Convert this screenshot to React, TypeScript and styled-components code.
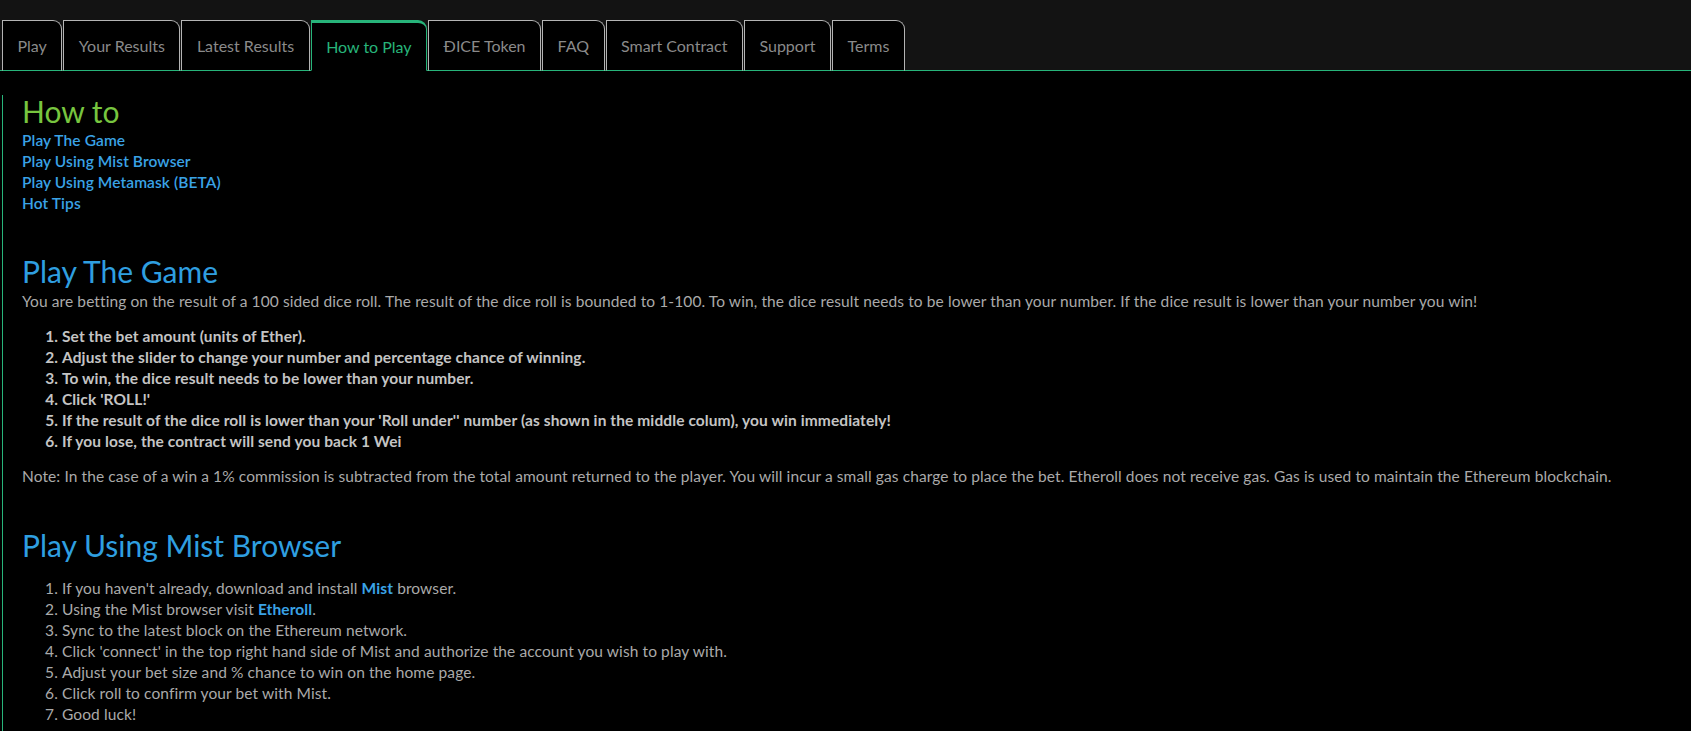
import React from "react";
import styled, { createGlobalStyle } from "styled-components";

const GlobalStyle = createGlobalStyle`
  html, body {
    margin: 0;
    padding: 0;
    background: #000;
  }
  body {
    font-family: "Lato", "Noto Sans", sans-serif;
    font-size: 15.5px;
    letter-spacing: 0.1px;
    line-height: 21px;
    color: #aaaaaa;
  }
`;

const GREEN = "#27b47a";

const Page = styled.div`
  min-height: 731px;
  background: #000;
`;

const TabBar = styled.nav`
  display: flex;
  align-items: flex-end;
  gap: 1px;
  padding: 20px 0 0 2px;
  background: #131313;
  border-bottom: 1px solid ${GREEN};
`;

const Tab = styled.a<{ $active?: boolean }>`
  display: flex;
  align-items: center;
  height: 51px;
  box-sizing: border-box;
  margin-bottom: -1px;
  padding: 0 14.5px;
  font-size: 16px;
  letter-spacing: 0;
  color: ${(p) => (p.$active ? GREEN : "#8a8a8a")};
  background: #000;
  border: 1px solid ${(p) => (p.$active ? GREEN : "#b4b4b4")};
  border-top-width: ${(p) => (p.$active ? "3px" : "1px")};
  border-bottom: ${(p) => (p.$active ? "1px solid #000" : `1px solid ${GREEN}`)};
  border-radius: 0 9px 0 0;
  text-decoration: none;
  white-space: nowrap;
  cursor: pointer;
`;

const Content = styled.main`
  margin-left: 2px;
  border-left: 1px solid ${GREEN};
  padding: 0 20px 20px 19px;
`;

const Title = styled.h2<{ $tone: "lime" | "blue"; $top: number; $bottom: number }>`
  margin: ${(p) => p.$top}px 0 ${(p) => p.$bottom}px;
  font-size: 30px;
  line-height: 33px;
  font-weight: 400;
  letter-spacing: 0;
  color: ${(p) => (p.$tone === "lime" ? "#77c53f" : "#2f9fe0")};
`;

const Toc = styled.div`
  display: flex;
  flex-direction: column;
`;

const TocLink = styled.a`
  color: #3aa3e6;
  font-weight: 600;
  text-decoration: none;
  line-height: 21px;
`;

const Para = styled.p`
  margin: 0 0 14px;
`;

const Steps = styled.ol<{ $bold?: boolean; $top?: number }>`
  margin: ${(p) => p.$top ?? 0}px 0 14px;
  padding-left: 40px;
  color: ${(p) => (p.$bold ? "#c4c4c4" : "#aaaaaa")};
  font-weight: ${(p) => (p.$bold ? 700 : 400)};
`;

const Strong = styled.a`
  color: #3aa3e6;
  font-weight: 700;
  text-decoration: none;
`;

const tabs = [
  "Play",
  "Your Results",
  "Latest Results",
  "How to Play",
  "ĐICE Token",
  "FAQ",
  "Smart Contract",
  "Support",
  "Terms",
];

export default function App() {
  return (
    <Page>
      <GlobalStyle />
      <TabBar>
        {tabs.map((t) => (
          <Tab key={t} $active={t === "How to Play"}>
            {t}
          </Tab>
        ))}
      </TabBar>
      <Content>
        <Title $tone="lime" $top={24} $bottom={2}>
          How to
        </Title>
        <Toc>
          <TocLink>Play The Game</TocLink>
          <TocLink>Play Using Mist Browser</TocLink>
          <TocLink>Play Using Metamask (BETA)</TocLink>
          <TocLink>Hot Tips</TocLink>
        </Toc>

        <Title $tone="blue" $top={41} $bottom={3}>
          Play The Game
        </Title>
        <Para>
          You are betting on the result of a 100 sided dice roll. The result of the dice roll is
          bounded to 1-100. To win, the dice result needs to be lower than your number. If the dice
          result is lower than your number you win!
        </Para>
        <Steps $bold>
          <li>Set the bet amount (units of Ether).</li>
          <li>Adjust the slider to change your number and percentage chance of winning.</li>
          <li>To win, the dice result needs to be lower than your number.</li>
          <li>Click 'ROLL!'</li>
          <li>
            If the result of the dice roll is lower than your 'Roll under'' number (as shown in the
            middle colum), you win immediately!
          </li>
          <li>If you lose, the contract will send you back 1 Wei</li>
        </Steps>
        <Para>
          Note: In the case of a win a 1% commission is subtracted from the total amount returned to
          the player. You will incur a small gas charge to place the bet. Etheroll does not receive
          gas. Gas is used to maintain the Ethereum blockchain.
        </Para>

        <Title $tone="blue" $top={42} $bottom={3}>
          Play Using Mist Browser
        </Title>
        <Steps $top={16}>
          <li>
            If you haven't already, download and install <Strong>Mist</Strong> browser.
          </li>
          <li>
            Using the Mist browser visit <Strong>Etheroll</Strong>.
          </li>
          <li>Sync to the latest block on the Ethereum network.</li>
          <li>
            Click 'connect' in the top right hand side of Mist and authorize the account you wish to
            play with.
          </li>
          <li>Adjust your bet size and % chance to win on the home page.</li>
          <li>Click roll to confirm your bet with Mist.</li>
          <li>Good luck!</li>
        </Steps>
      </Content>
    </Page>
  );
}
